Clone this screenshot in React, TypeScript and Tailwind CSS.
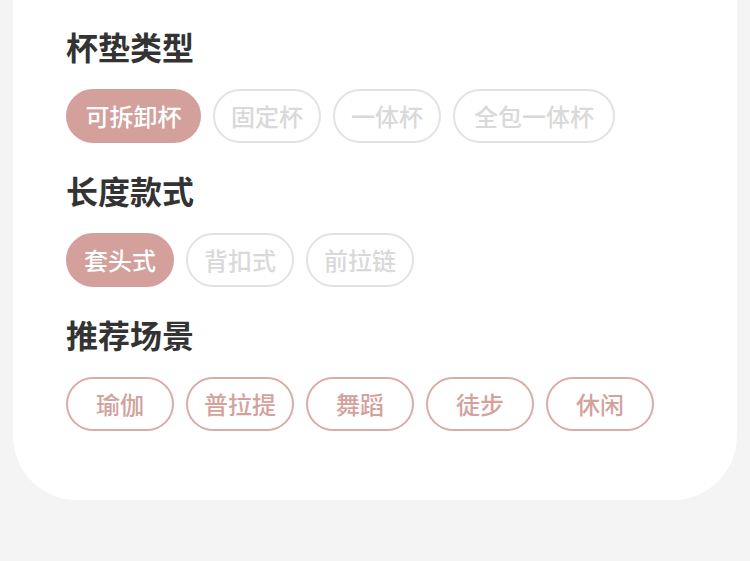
import React from 'react';

type Chip = { label: string; state: 'active' | 'idle' | 'tag' };

const sections: { title: string; chips: Chip[] }[] = [
  {
    title: '杯垫类型',
    chips: [
      { label: '可拆卸杯', state: 'active' },
      { label: '固定杯', state: 'idle' },
      { label: '一体杯', state: 'idle' },
      { label: '全包一体杯', state: 'idle' },
    ],
  },
  {
    title: '长度款式',
    chips: [
      { label: '套头式', state: 'active' },
      { label: '背扣式', state: 'idle' },
      { label: '前拉链', state: 'idle' },
    ],
  },
  {
    title: '推荐场景',
    chips: [
      { label: '瑜伽', state: 'tag' },
      { label: '普拉提', state: 'tag' },
      { label: '舞蹈', state: 'tag' },
      { label: '徒步', state: 'tag' },
      { label: '休闲', state: 'tag' },
    ],
  },
];

const chipStyle = {
  active: 'bg-[#d3a09c] border-[#d3a09c] text-white',
  idle: 'bg-white border-[#e2e2e2] text-[#d9d9d9]',
  tag: 'bg-white border-[#d9aca7] text-[#d3a29d]',
};

// chip widths by label length
const chipWidth = (label: string) => {
  if (label.length >= 5) return 'w-[162px]';
  if (label.length === 4) return 'w-[135px]';
  return 'w-[108px]';
};

const font = { fontFamily: '"Noto Sans CJK SC", "Noto Sans", sans-serif' };

export default function App() {
  return (
    <div className="w-[750px] h-[561px] bg-[#f4f4f4] overflow-hidden" style={font}>
      <div className="mx-[13px] bg-white rounded-b-[64px] pl-[53px] pt-[30px] pb-[69px] flex flex-col gap-[31px]">
        {sections.map((s) => (
          <div key={s.title} className="flex flex-col">
            <h2 className="text-[32px] leading-[32px] font-bold text-[#333333]">{s.title}</h2>
            <div className="mt-[27px] flex gap-[12px]">
              {s.chips.map((c) => (
                <span
                  key={c.label}
                  className={`h-[54px] ${chipWidth(c.label)} shrink-0 rounded-full border-2 flex items-center justify-center text-[24px] font-medium leading-none ${chipStyle[c.state]}`}
                >
                  {c.label}
                </span>
              ))}
            </div>
          </div>
        ))}
      </div>
    </div>
  );
}
